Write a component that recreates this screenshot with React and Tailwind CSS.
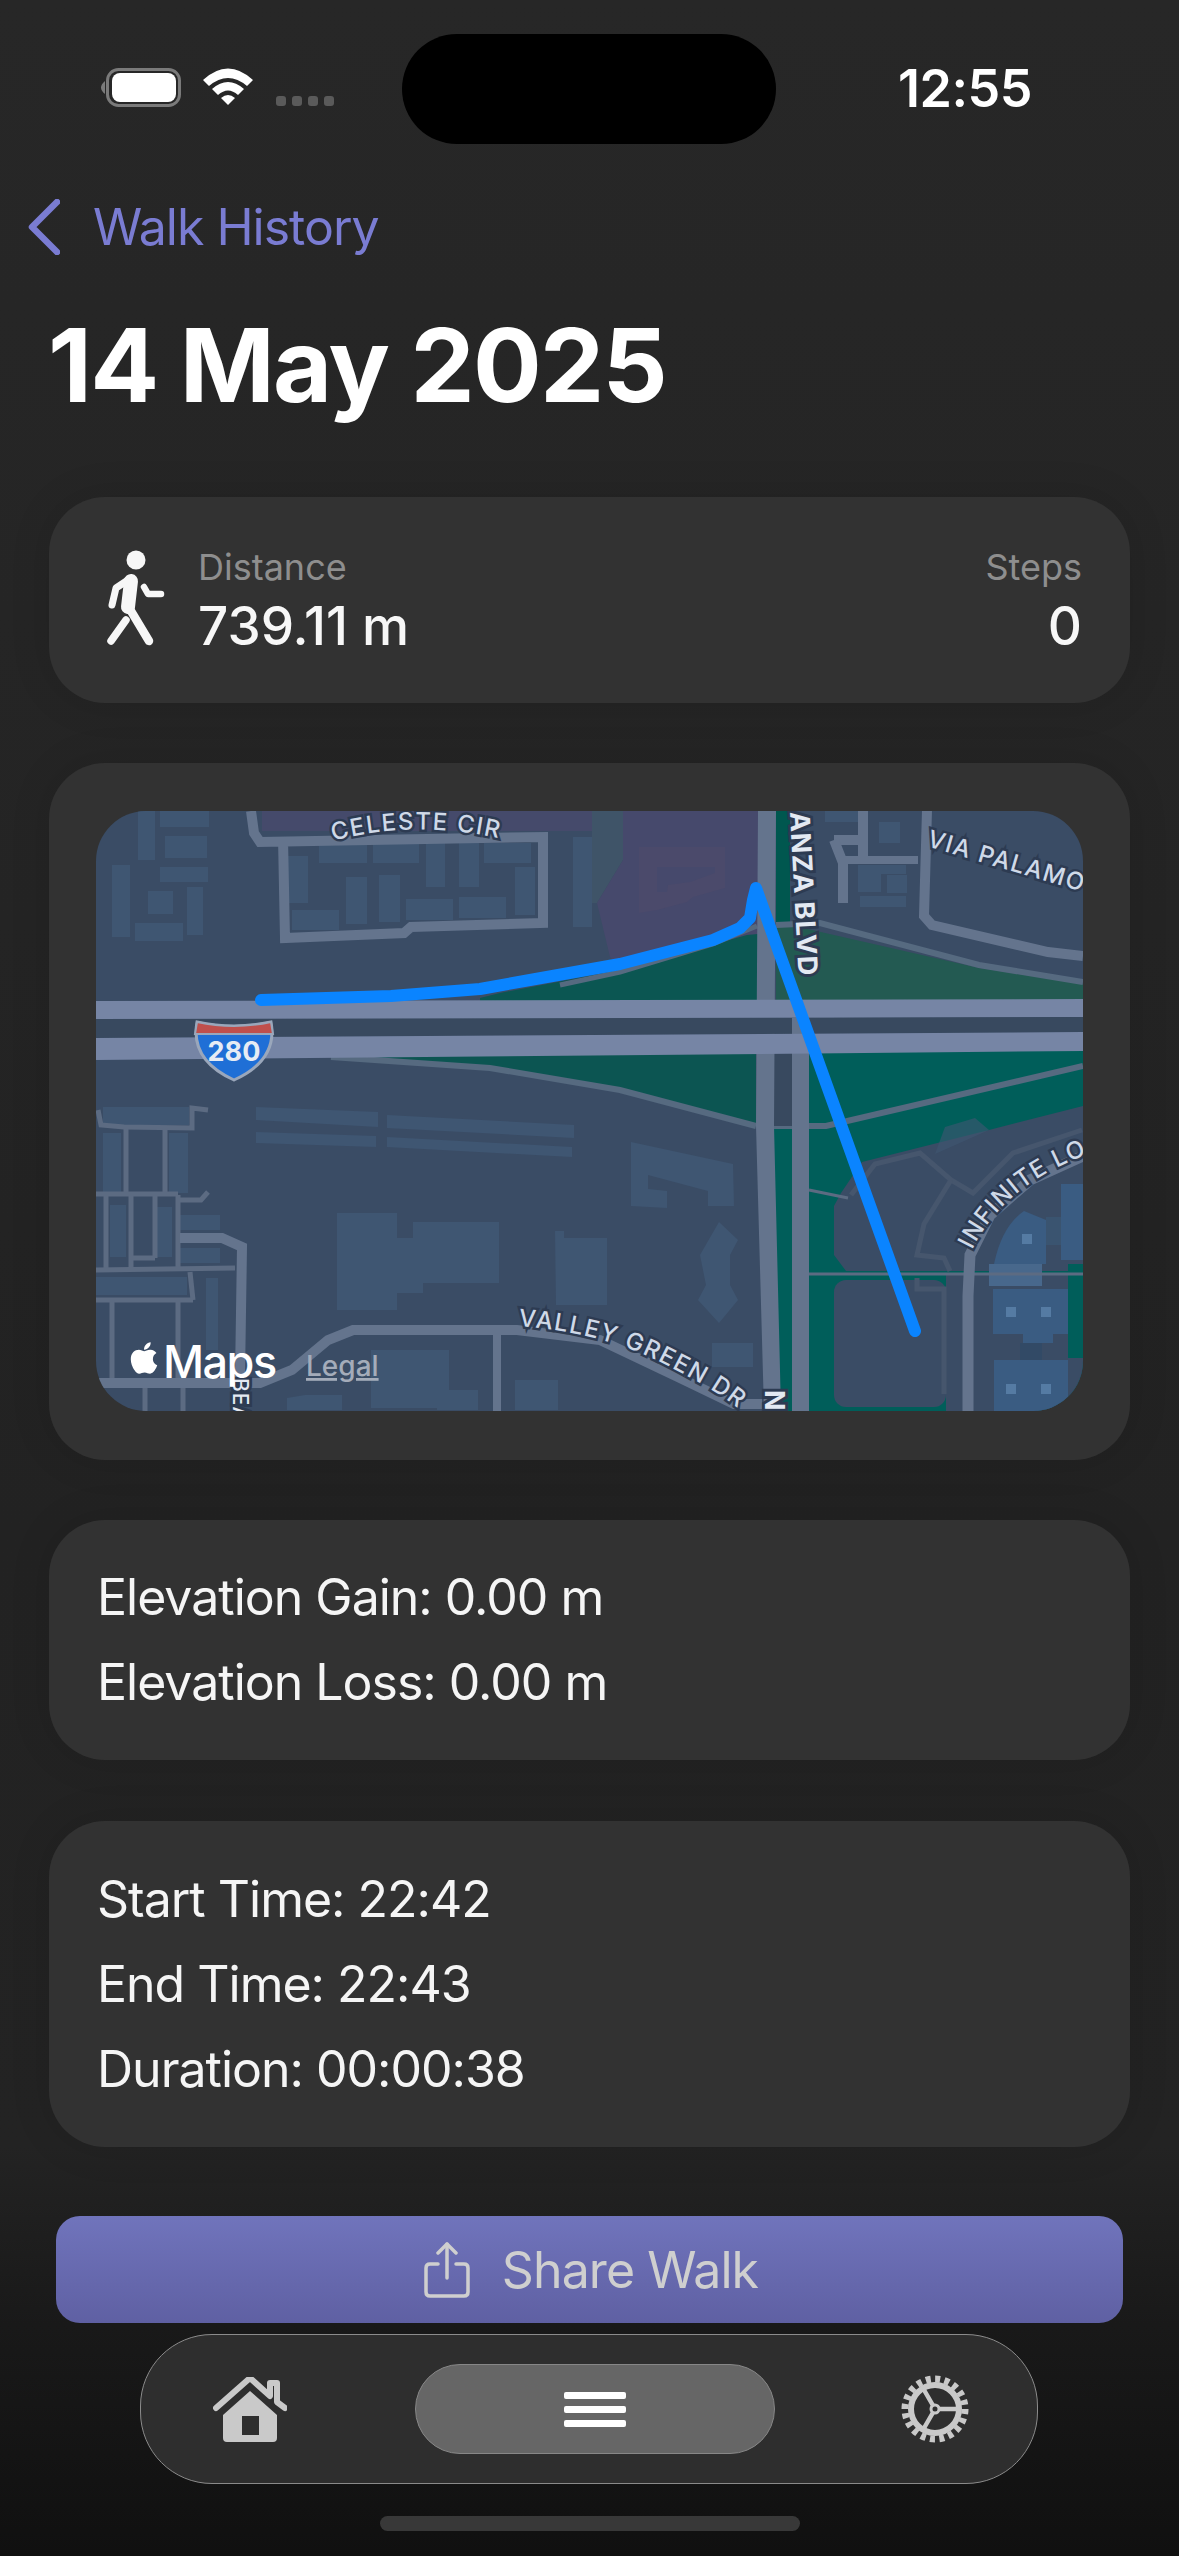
import { FaApple } from 'react-icons/fa';

const road = '#64748d';
const thin = '#5c6b82';
const bldg = '#3f5672';
const blue = '#3a5c82';
const green = '#005e5a';

// [x, y, w, h]
const buildings = [
  [138, 811, 17, 49], [160, 811, 49, 16], [165, 836, 42, 22], [112, 865, 18, 72],
  [160, 867, 48, 15], [148, 891, 25, 23], [187, 887, 16, 48], [135, 923, 48, 18],
  [288, 856, 20, 47], [319, 843, 48, 20], [373, 843, 46, 20], [426, 843, 19, 44],
  [459, 843, 20, 44], [484, 843, 47, 20], [515, 867, 20, 48], [346, 877, 21, 47],
  [379, 875, 21, 47], [406, 899, 47, 21], [459, 897, 47, 21], [292, 910, 47, 20],
  [573, 837, 19, 90], [103, 1107, 86, 18], [103, 1133, 18, 60], [169, 1133, 19, 60],
  [110, 1205, 16, 52], [156, 1207, 16, 50], [180, 1215, 40, 15], [180, 1248, 40, 15],
  [96, 1277, 91, 18], [206, 1278, 12, 72], [371, 1350, 78, 58], [437, 1390, 41, 20],
  [515, 1380, 43, 30], [712, 1343, 41, 24], [825, 810, 35, 12], [879, 822, 21, 21],
  [858, 865, 23, 27], [887, 875, 20, 18], [860, 896, 46, 11], [858, 865, 48, 9],
];

const polys = [
  '256,1107 378,1112 378,1127 256,1120',
  '256,1132 376,1136 376,1147 256,1143',
  '387,1115 574,1125 574,1138 387,1128',
  '387,1137 572,1147 572,1157 387,1147',
  '337,1213 397,1213 397,1238 413,1238 413,1222 499,1222 499,1283 423,1283 423,1293 397,1293 397,1310 337,1310',
  '555,1231 564,1231 564,1238 607,1238 607,1305 556,1305',
  '631,1142 733,1164 734,1206 708,1206 708,1191 648,1175 648,1189 667,1191 667,1208 631,1206',
  '719,1222 738,1240 730,1255 730,1285 738,1300 719,1323 698,1300 706,1285 700,1255',
  '287,1410 287,1398 305,1395 342,1395 342,1410',
];

const thinRoads = [
  '98,1110 101,1125 124,1127 192,1128 192,1108 208,1110',
  '126,1128 126,1193', '165,1128 165,1193', '96,1194 178,1194',
  '106,1195 106,1268', '131,1195 131,1268', '155,1195 155,1258', '178,1195 178,1268',
  '131,1258 155,1258', '180,1200 201,1200 208,1192', '96,1270 235,1268',
  '190,1272 193,1300', '96,1300 193,1300', '112,1300 112,1383', '178,1300 178,1383',
  '145,1383 145,1411', '183,1383 183,1411',
];

const innerRoads = [
  '851,1195 875,1164 920,1153 951,1180 973,1193 1013,1153 1082,1130',
  '951,1180 924,1224 917,1255 944,1258 950,1271',
  '917,1278 917,1289 944,1289 944,1394',
];

function WalkIcon() {
  return (
    <svg viewBox="100 545 70 105" className="w-[70px] h-[105px]" fill="none" stroke="#f7f7f7" strokeLinecap="round" strokeLinejoin="round">
      <circle cx="136" cy="560" r="9.5" fill="#f7f7f7" stroke="none" />
      <path d="M131 581 L128 607" strokeWidth="14" />
      <path d="M128 580 L116 588 L112 605" strokeWidth="7" />
      <path d="M144 587 L148 594 L161 594" strokeWidth="6.5" />
      <path d="M128 606 L149 641" strokeWidth="8.5" />
      <path d="M126 620 L111 641" strokeWidth="7.5" />
    </svg>
  );
}

function MapView() {
  return (
    <svg viewBox="96 811 987 600" className="block w-full h-full" fontFamily="Inter, sans-serif">
      <rect x="96" y="811" width="987" height="600" fill="#3a4c65" />

      {/* purple campus */}
      <rect x="262" y="811" width="340" height="20" fill="#454a6b" />
      <polygon points="592,811 623,811 623,860 597,903 592,903" fill="#3f5468" />
      <polygon points="623,811 758,811 758,934 620,968 610,957 597,903 623,860" fill="#46496c" />
      <polygon points="639,847 725,847 725,888 693,897 687,902 657,910 639,913" fill="#4b4a6b" />
      <polygon points="657,867 715,867 715,873 690,882 668,885 667,892 657,892" fill="#46496c" />

      {/* parks */}
      <polygon points="480,998 500,993 620,970 747,935 758,934 758,1005 480,1005" fill="#0b5652" />
      <polygon points="776,811 790,811 790,925 979,968 1083,984 1083,1005 776,1005" fill="#235a52" />
      <rect x="776" y="811" width="14" height="112" fill="#00574f" />
      <polygon points="331,1056 756,1050 756,1126 620,1090 490,1068" fill="#0c5552" />
      <rect x="774" y="1126" width="18" height="285" fill={green} />
      <polygon points="809,1050 1083,1050 1083,1411 809,1411" fill={green} />
      <polygon points="1083,1106 989,1130 862,1162 841,1193 834,1206 834,1255 846,1271 1083,1271" fill="#3a4c65" />
      <rect x="834" y="1280" width="112" height="127" rx="12" fill="#3a4c65" />
      <rect x="946" y="1274" width="137" height="137" fill="#3a4c65" />
      <rect x="1068" y="1264" width="15" height="94" fill={green} />
      <polygon points="935,1154 989,1130 975,1118 945,1127" fill={bldg} opacity="0.6" />

      {buildings.map((b, i) => (
        <rect key={i} x={b[0]} y={b[1]} width={b[2]} height={b[3]} fill={bldg} />
      ))}
      {polys.map((p, i) => (
        <polygon key={i} points={p} fill={bldg} />
      ))}

      {/* infinite loop buildings */}
      <path d="M994 1264 Q1002 1226 1024 1211 L1046 1220 L1046 1264 Z" fill={blue} />
      <rect x="1046" y="1217" width="15" height="28" fill="#3a5470" />
      <rect x="1061" y="1184" width="22" height="76" fill={blue} />
      <rect x="989" y="1264" width="53" height="22" fill="#48688c" />
      <rect x="993" y="1289" width="75" height="45" fill={blue} />
      <rect x="1023" y="1334" width="30" height="9" fill={blue} />
      <rect x="1020" y="1343" width="22" height="17" fill="#324a66" />
      <rect x="994" y="1360" width="74" height="51" fill={blue} />
      {[[1022, 1234], [1006, 1307], [1041, 1307], [1006, 1384], [1041, 1384]].map((s, i) => (
        <rect key={i} x={s[0]} y={s[1]} width="10" height="10" fill="#557ba3" />
      ))}

      {thinRoads.map((r, i) => (
        <polyline key={i} points={r} fill="none" stroke={thin} strokeWidth="5" />
      ))}
      {innerRoads.map((r, i) => (
        <polyline key={i} points={r} fill="none" stroke="#46566d" strokeWidth="5" />
      ))}
      <line x1="809" y1="1274" x2="1083" y2="1274" stroke={thin} strokeWidth="3" />
      <line x1="809" y1="1190" x2="848" y2="1198" stroke={thin} strokeWidth="3" />

      {/* streets */}
      <g fill="none" stroke={road} strokeWidth="10">
        <polyline points="251,811 254,833 260,842 543,837 543,923 411,927 404,933 285,938 283,838" />
        <polyline points="863,810 863,863" />
        <polyline points="834,840 862,840" />
        <polyline points="834,840 843,863 843,903" />
        <polyline points="843,860 918,860" strokeWidth="8" />
        <polyline points="927,810 924,916 932,925 1048,952 1083,956" />
        <polyline points="180,1238 222,1238 242,1247 240,1377" />
        <polyline points="96,1383 260,1383 292,1370 328,1340 353,1330 517,1330 600,1340 680,1378 734,1404 762,1404" />
        <polyline points="497,1335 497,1411" strokeWidth="8" />
        <polyline points="968,1411 968,1296 970,1255 990,1215 1030,1180 1083,1156" strokeWidth="11" />
      </g>
      <g fill="none" stroke="#566a80" strokeWidth="6">
        <polyline points="331,1057 490,1068 620,1090 756,1126" />
        <polyline points="809,1126 826,1126 1083,1066" />
        <polyline points="776,925 820,923 979,965 1083,982" />
        <polyline points="560,985 620,972 713,944 757,926" strokeWidth="5" />
        <polyline points="774,1126 809,1126" />
      </g>

      {/* De Anza + 280 */}
      <rect x="774" y="1019" width="35" height="107" fill="#38495f" />
      <polygon points="758,811 776,811 774,1126 781,1411 764,1411 756,1126" fill={road} />
      <polygon points="96,1001 1083,999 1083,1017 96,1021" fill="#7685a5" />
      <polygon points="96,1019 1083,1017 1083,1032 96,1038" fill="#38495f" />
      <rect x="792" y="1017" width="17" height="394" fill={road} />
      <polygon points="96,1038 1083,1032 1083,1051 96,1060" fill="#7685a5" />

      {/* shield */}
      <path d="M197 1022 Q234 1030 271 1022 Q278 1060 234 1080 Q190 1060 197 1022 Z" fill="#1f6fd6" stroke="#9aa7bb" strokeWidth="3" />
      <path d="M197 1022 Q234 1030 271 1022 L273 1034 L195 1034 Z" fill="#bf4f4c" stroke="#9aa7bb" strokeWidth="2" />
      <text x="234" y="1061" textAnchor="middle" fontSize="27" fontWeight="700" fill="#e6ecf4">280</text>

      {/* route */}
      <polyline
        points="261,1000 391,996 480,989 530,980 620,964 713,940 740,928 750,918 753,900 756,888 915,1331"
        fill="none" stroke="#0a84ff" strokeWidth="12" strokeLinecap="round" strokeLinejoin="round"
      />

      <defs>
        <path id="celeste" d="M333 841 Q418 818 510 841" />
        <path id="via" d="M926 846 L1100 897" />
        <path id="valley" d="M518 1326 Q600 1332 660 1362 T740 1410" />
        <path id="infinite" d="M972 1250 Q1005 1182 1095 1152" />
      </defs>
      <g fill="#cfd9e8" stroke="#2d3b52" strokeWidth="5" paintOrder="stroke" fontSize="24" fontWeight="500" letterSpacing="1.5">
        <text><textPath href="#celeste">CELESTE CIR</textPath></text>
        <text><textPath href="#via">VIA PALAMO</textPath></text>
        <text><textPath href="#valley">VALLEY GREEN DR</textPath></text>
        <text><textPath href="#infinite">INFINITE LOOP</textPath></text>
      </g>
      <g fill="#e3e9f2" stroke="#2d3b52" strokeWidth="6" paintOrder="stroke" fontSize="27" fontWeight="700" letterSpacing="1">
        <text transform="translate(790 812) rotate(87)">ANZA BLVD</text>
        <text transform="translate(765 1390) rotate(90)">N</text>
        <text transform="translate(233 1378) rotate(90)" fontSize="21" fontWeight="500">BEA</text>
      </g>

      {/* attribution */}
      <FaApple x="126" y="1340" size="36" color="#ffffff" />
      <text x="163" y="1378" fontSize="45" fontWeight="500" fill="#ffffff" letterSpacing="-1.5">Maps</text>
      <text x="306" y="1376" fontSize="28" fontWeight="500" fill="#a4acba" textDecoration="underline">Legal</text>
    </svg>
  );
}

export default function App() {
  return (
    <div className="w-[1179px] h-[2556px] overflow-hidden flex flex-col font-[Inter,sans-serif] text-white bg-[linear-gradient(to_bottom,#272727_0%,#222222_60%,#232323_84%,#191919_91%,#101010_100%)]">
      {/* status bar */}
      <div className="flex mt-[34px] h-[110px] shrink-0">
        <div className="w-[402px] pl-[99px] pt-[34px] flex items-start">
          <svg viewBox="0 0 82 39" className="w-[82px] h-[39px]">
            <path d="M6 13 Q-2 19.5 6 26 Z" fill="#7a7a7a" />
            <rect x="8.5" y="1.5" width="72" height="36" rx="11" fill="none" stroke="#7a7a7a" strokeWidth="3" />
            <rect x="13" y="5" width="64" height="29" rx="8" fill="#fff" />
          </svg>
          <svg viewBox="0 0 50 38" className="w-[50px] h-[38px] ml-[22px]" fill="#fff">
            <path d="M0 12 Q25 -11 50 12 L44 18 Q25 2 6 18 Z" />
            <path d="M9 21 Q25 7 41 21 L35 27 Q25 18 15 27 Z" />
            <path d="M18 30 Q25 24 32 30 L25 37 Z" />
          </svg>
          <div className="flex gap-[6px] ml-[23px] mt-[28px]">
            <div className="w-[10px] h-[10px] rounded-[3px] bg-[#5a5a5a]" />
            <div className="w-[10px] h-[10px] rounded-[3px] bg-[#5a5a5a]" />
            <div className="w-[10px] h-[10px] rounded-[3px] bg-[#5a5a5a]" />
            <div className="w-[10px] h-[10px] rounded-[3px] bg-[#5a5a5a]" />
          </div>
        </div>
        <div className="w-[374px] h-[110px] rounded-[55px] bg-black" />
        <div className="ml-[122px] pt-[25px] text-[52px] leading-[60px] font-semibold tracking-[-0.5px]">12:55</div>
      </div>

      {/* back */}
      <div className="flex items-center h-[56px] mt-[55px] pl-[28px] shrink-0 text-[#7a7cd2]">
        <svg viewBox="0 0 32 56" className="w-[32px] h-[56px]" fill="none" stroke="currentColor" strokeWidth="6.5" strokeLinecap="round" strokeLinejoin="round">
          <path d="M29 3 L4 28 L29 53" />
        </svg>
        <span className="ml-[33px] text-[50px] leading-[56px] tracking-[-1px]">Walk History</span>
      </div>

      <h1 className="mt-[50px] h-[120px] pl-[48px] text-[102px] leading-[120px] font-bold tracking-[-1.8px] shrink-0">14 May 2025</h1>

      {/* distance */}
      <div className="mt-[72px] mx-[49px] h-[206px] px-[48px] rounded-[56px] bg-[#323232] shadow-[0_0_40px_rgba(0,0,0,0.12)] flex items-center shrink-0">
        <div className="ml-[3px] mb-[5px]"><WalkIcon /></div>
        <div className="ml-[28px] mt-[6px] flex flex-col">
          <span className="text-[36px] leading-[44px] text-[#8e8e8e] -mt-[4px]">Distance</span>
          <span className="mt-[6px] text-[53px] leading-[62px] font-medium text-[#f7f7f7]">739.11 m</span>
        </div>
        <div className="ml-auto mt-[6px] flex flex-col items-end">
          <span className="text-[36px] leading-[44px] text-[#8e8e8e] -mt-[4px]">Steps</span>
          <span className="mt-[6px] text-[53px] leading-[62px] font-medium text-[#f7f7f7]">0</span>
        </div>
      </div>

      {/* map */}
      <div className="mt-[60px] mx-[49px] h-[697px] px-[47px] py-[48px] rounded-[56px] bg-[#323232] shadow-[0_0_40px_rgba(0,0,0,0.12)] shrink-0">
        <div className="w-full h-[600px] rounded-[50px] overflow-hidden">
          <MapView />
        </div>
      </div>

      {/* elevation */}
      <div className="mt-[60px] mx-[49px] h-[240px] px-[48px] rounded-[56px] bg-[#323232] shadow-[0_0_40px_rgba(0,0,0,0.12)] flex flex-col justify-center text-[50px] leading-[85px] tracking-[-1px] text-[#f5f5f5] shrink-0">
        <div>Elevation Gain: 0.00 m</div>
        <div>Elevation Loss: 0.00 m</div>
      </div>

      {/* times */}
      <div className="mt-[61px] mx-[49px] h-[326px] px-[48px] rounded-[56px] bg-[#323232] shadow-[0_0_40px_rgba(0,0,0,0.12)] flex flex-col justify-center text-[50px] leading-[85px] tracking-[-1px] text-[#f5f5f5] shrink-0">
        <div>Start Time: 22:42</div>
        <div>End Time: 22:43</div>
        <div>Duration: 00:00:38</div>
      </div>

      {/* share */}
      <div className="mt-[69px] mx-[56px] pl-[3px] h-[107px] rounded-[24px] bg-gradient-to-b from-[#7074bc] to-[#5f60a3] flex items-center justify-center text-[#cfcfcf] shrink-0">
        <svg viewBox="0 0 46 56" className="w-[46px] h-[56px] mr-[32px]" fill="none" stroke="currentColor" strokeWidth="3.5" strokeLinecap="round" strokeLinejoin="round">
          <path d="M23 2 L23 36" />
          <path d="M14 11 L23 2 L32 11" />
          <path d="M14 22 L6 22 Q2 22 2 26 L2 50 Q2 54 6 54 L40 54 Q44 54 44 50 L44 26 Q44 22 40 22 L32 22" />
        </svg>
        <span className="text-[50px] leading-[60px] tracking-[-0.9px]">Share Walk</span>
      </div>

      {/* tabs */}
      <div className="mt-[11px] ml-[140px] w-[898px] h-[150px] pl-[72px] rounded-[72px] border-[1.5px] border-[#8b8b8b] bg-[#2e2e2e] flex items-center shrink-0">
        <svg viewBox="213 2375 74 65" className="w-[74px] h-[65px]" fill="#c9c9c9">
          <path d="M216 2406 L250 2376 L270 2394 L270 2381 L277 2381 L277 2400 L285 2406" fill="none" stroke="#c9c9c9" strokeWidth="6" strokeLinecap="round" strokeLinejoin="round" />
          <path fillRule="evenodd" d="M223 2413 L250 2389 L277 2413 L277 2436 Q277 2440 273 2440 L227 2440 Q223 2440 223 2436 Z M242 2414 L242 2433 L259 2433 L259 2414 Z" />
        </svg>
        <div className="ml-[128px] w-[360px] h-[90px] rounded-[45px] border-[1.5px] border-[#878787] bg-[#666666] flex flex-col items-center justify-center gap-[7px]">
          <div className="w-[62px] h-[7px] rounded-[2px] bg-white" />
          <div className="w-[62px] h-[7px] rounded-[2px] bg-white" />
          <div className="w-[62px] h-[7px] rounded-[2px] bg-white" />
        </div>
        <svg viewBox="-34 -34 68 68" className="ml-[126px] w-[68px] h-[68px]" fill="none" stroke="#c9c9c9">
          <circle r="30" strokeWidth="7" strokeDasharray="5 4.42" />
          <circle r="24" strokeWidth="6" />
          <circle r="4" strokeWidth="3" />
          <path d="M4 0 L23 0 M-2 -3.5 L-11.5 -20 M-2 3.5 L-11.5 20" strokeWidth="4.5" />
        </svg>
      </div>

      {/* home indicator */}
      <div className="mt-[32px] ml-[380px] w-[420px] h-[15px] rounded-[8px] bg-[#383838] shrink-0" />
    </div>
  );
}
